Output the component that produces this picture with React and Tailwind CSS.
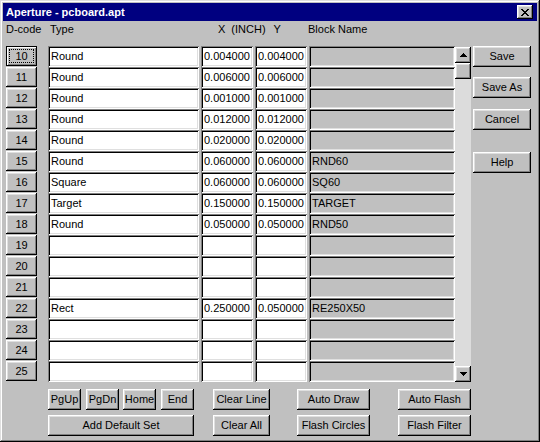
import React from "react";

const raised =
  "shadow-[inset_-1px_-1px_#000,inset_1px_1px_#fff,inset_-2px_-2px_#808080,inset_2px_2px_#dfdfdf]";
const sunken =
  "shadow-[inset_1px_1px_#808080,inset_-1px_-1px_#fff,inset_2px_2px_#000,inset_-2px_-2px_#dfdfdf]";

const rows = [
  ["10", "Round", "0.004000", "0.004000", ""],
  ["11", "Round", "0.006000", "0.006000", ""],
  ["12", "Round", "0.001000", "0.001000", ""],
  ["13", "Round", "0.012000", "0.012000", ""],
  ["14", "Round", "0.020000", "0.020000", ""],
  ["15", "Round", "0.060000", "0.060000", "RND60"],
  ["16", "Square", "0.060000", "0.060000", "SQ60"],
  ["17", "Target", "0.150000", "0.150000", "TARGET"],
  ["18", "Round", "0.050000", "0.050000", "RND50"],
  ["19", "", "", "", ""],
  ["20", "", "", "", ""],
  ["21", "", "", "", ""],
  ["22", "Rect", "0.250000", "0.050000", "RE250X50"],
  ["23", "", "", "", ""],
  ["24", "", "", "", ""],
  ["25", "", "", "", ""],
];

function Btn({ className = "", children }) {
  return (
    <div className={`flex items-center justify-center bg-[#c0c0c0] ${raised} ${className}`}>
      {children}
    </div>
  );
}

function Field({ value, gray, className = "" }) {
  return (
    <div
      className={`flex items-center pl-[3px] h-[21px] overflow-hidden whitespace-nowrap ${sunken} ${
        gray ? "bg-[#c0c0c0]" : "bg-white"
      } ${className}`}
    >
      {value}
    </div>
  );
}

function Arrow({ down }) {
  return (
    <svg width="7" height="4" viewBox="0 0 7 4" shapeRendering="crispEdges">
      {down ? (
        <path d="M0 0h7v1H0zM1 1h5v1H1zM2 2h3v1H2zM3 3h1v1H3z" fill="#000" />
      ) : (
        <path d="M3 0h1v1H3zM2 1h3v1H2zM1 2h5v1H1zM0 3h7v1H0z" fill="#000" />
      )}
    </svg>
  );
}

function CloseGlyph() {
  return (
    <svg width="8" height="7" viewBox="0 0 8 7" shapeRendering="crispEdges">
      <path
        d="M0 0h2v1H0zM6 0h2v1H6zM1 1h2v1H1zM5 1h2v1H5zM2 2h4v1H2zM3 3h2v1H3zM2 4h4v1H2zM1 5h2v1H1zM5 5h2v1H5zM0 6h2v1H0zM6 6h2v1H6z"
        fill="#000"
      />
    </svg>
  );
}

export default function App() {
  return (
    <div
      className="w-[540px] h-[442px] bg-[#c0c0c0] p-[3px] flex flex-col text-[11px] leading-[13px] text-black shadow-[inset_-1px_-1px_#000,inset_1px_1px_#dfdfdf,inset_-2px_-2px_#808080,inset_2px_2px_#fff]"
      style={{ fontFamily: '"Liberation Sans", Arial, sans-serif' }}
    >
      {/* title bar */}
      <div className="h-[18px] bg-[#000080] flex items-center justify-between pl-[3px] pr-[4px]">
        <span className="text-white font-bold">Aperture - pcboard.apt</span>
        <Btn className="w-[16px] h-[14px]">
          <CloseGlyph />
        </Btn>
      </div>

      <div className="flex pl-[3px]">
        {/* table */}
        <div className="flex flex-col">
          <div className="flex h-[13px] mt-[2px]">
            <span className="w-[44px]">D-code</span>
            <span className="w-[150px]">Type</span>
            <div className="w-[108px] flex">
              <span className="ml-[18px]">X</span>
              <span className="ml-[6px]">(INCH)</span>
              <span className="ml-[8px]">Y</span>
            </div>
            <span>Block Name</span>
          </div>

          <div className="flex flex-col mt-[10px]">
            {rows.map(([code, type, x, y, block]) => (
              <div key={code} className="flex h-[21px]">
                {code === "10" ? (
                  <div className="w-[31px] h-[20px] p-[3px] flex bg-[#c0c0c0] shadow-[inset_0_0_0_1px_#000,inset_2px_2px_#fff,inset_-2px_-2px_#808080]">
                    <div className="flex-1 flex items-center justify-center border border-dotted border-black">
                      {code}
                    </div>
                  </div>
                ) : (
                  <Btn className="w-[31px] h-[20px]">{code}</Btn>
                )}
                <Field value={type} className="ml-[11px] w-[151px]" />
                <Field value={x} className="ml-[2px] w-[52px]" />
                <Field value={y} className="ml-[2px] w-[52px]" />
                <Field value={block} gray className="ml-[2px] w-[146px]" />
              </div>
            ))}
          </div>
        </div>

        {/* scrollbar */}
        <div className="mt-[26px] w-[16px] h-[335px] flex flex-col bg-[#dcdcdc]">
          <Btn className="w-[16px] h-[16px]">
            <Arrow />
          </Btn>
          <Btn className="w-[16px] h-[16px]" />
          <div className="flex-1" />
          <Btn className="w-[16px] h-[16px]">
            <Arrow down />
          </Btn>
        </div>

        {/* side buttons */}
        <div className="ml-[2px] mt-[25px] flex flex-col">
          <Btn className="w-[58px] h-[21px]">Save</Btn>
          <Btn className="w-[58px] h-[21px] mt-[10px]">Save As</Btn>
          <Btn className="w-[58px] h-[21px] mt-[11px]">Cancel</Btn>
          <Btn className="w-[58px] h-[21px] mt-[22px]">Help</Btn>
        </div>
      </div>

      {/* bottom buttons */}
      <div className="flex pl-[45px] mt-[7px]">
        <Btn className="w-[33px] h-[21px]">PgUp</Btn>
        <Btn className="w-[33px] h-[21px] ml-[5px]">PgDn</Btn>
        <Btn className="w-[33px] h-[21px] ml-[4px]">Home</Btn>
        <Btn className="w-[33px] h-[21px] ml-[5px]">End</Btn>
        <Btn className="w-[57px] h-[21px] ml-[19px]">Clear Line</Btn>
        <Btn className="w-[73px] h-[21px] ml-[27px]">Auto Draw</Btn>
        <Btn className="w-[73px] h-[21px] ml-[28px]">Auto Flash</Btn>
      </div>
      <div className="flex pl-[45px] mt-[5px]">
        <Btn className="w-[146px] h-[21px]">Add Default Set</Btn>
        <Btn className="w-[57px] h-[21px] ml-[19px]">Clear All</Btn>
        <Btn className="w-[73px] h-[21px] ml-[27px]">Flash Circles</Btn>
        <Btn className="w-[73px] h-[21px] ml-[28px]">Flash Filter</Btn>
      </div>
    </div>
  );
}
